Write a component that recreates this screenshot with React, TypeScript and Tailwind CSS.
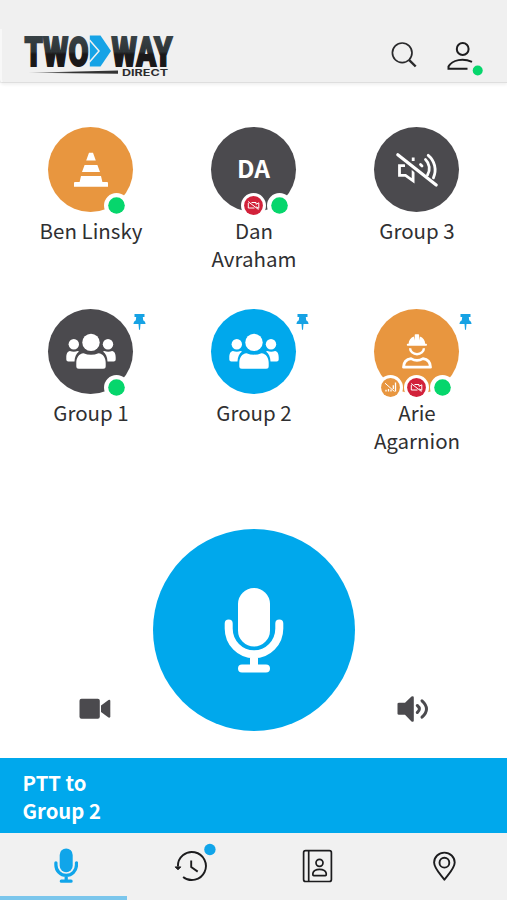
import React from "react";

type Status = "online" | "noVideo" | "noSignal";

type Contact = {
  name: string;
  color: string;
  icon: React.ReactNode;
  pinned?: boolean;
  status?: Status[];
};

function ConeIcon() {
  return (
    <svg viewBox="0 0 85 85" className="size-[85px]" fill="#fff">
      <path d="M41 25.7h4l2.8 7.8h-9.6zM36.6 38h12.8l2.6 7H34zM33 49h20l1.4 6H59q1 0 1 1v3.7H26V56q0-1 1-1h4.6z" />
    </svg>
  );
}

function MutedIcon() {
  return (
    <svg viewBox="0 0 85 85" className="size-[85px]" fill="none" stroke="#fff" strokeWidth="2.8">
      <path d="M31 38.6h-5.5v9.8h6l7.6 5.4V43M39.2 30.5v3.5" />
      <path d="M46.5 37.5l1.500 1.500M51.500 32.500a12.500 12.500 0 0 1 2 15.500M54.2 28.3a19 19 0 0 1 5.2 22.5" strokeLinecap="round" />
      <path d="M24.6 30.4l36.5 29.6" stroke="#4b4a4e" strokeWidth="3" />
      <path d="M23.8 27.8l38.4 30.3" strokeLinecap="round" strokeWidth="3.2" />
    </svg>
  );
}

function GroupIcon() {
  return (
    <svg viewBox="0 0 85 85" className="size-[85px]" fill="#fff">
      <circle cx="43" cy="33.4" r="8.7" />
      <circle cx="25.8" cy="35.3" r="5.2" />
      <circle cx="60" cy="35.3" r="5.2" />
      <path d="M35.5 44.2c5 2 10 2 15 0 4.5.3 7.2 4.5 7.2 9.5v3.5q0 2.5-2.5 2.5H30.8q-2.5 0-2.5-2.5v-3.5c0-5 2.7-9.200 7.2-9.500z" />
      <path d="M21.9 42c2.5 1 5.2 1.1 7.8 0l1.3.6c-2.8 2-4.3 5.5-4.5 9.900h-6.200q-2 0-2-2v-2c0-3.500 1.100-6.200 3.600-6.500zM64.100 42c-2.500 1-5.200 1.100-7.800 0l-1.300.6c2.800 2 4.300 5.500 4.500 9.900h6.200q2 0 2-2v-2c0-3.500-1.100-6.200-3.600-6.500z" />
    </svg>
  );
}

function WorkerIcon() {
  return (
    <svg viewBox="0 0 85 85" className="size-[85px]" fill="#fff">
      <path d="M33.600 34.700h1c.1-3.600 2.200-6.300 5.300-7.300l.8 4.200V26q0-.8.8-.8h2.800q.8 0 .8.8v5.600l.8-4.200c3.100 1 5.200 3.700 5.300 7.300h1q.8 0 .8 1t-.8 1H33.600q-.8 0-.8-1t.8-1z" />
      <path d="M36.100 39.200a6.900 6 0 0 0 13.800 0" fill="none" stroke="#fff" strokeWidth="2.400" />
      <path d="M37 49.600q6 3.400 12 0c4.500.5 7.300 3.500 7.500 8.600h-27c.2-5.100 3-8.100 7.500-8.600z" fill="none" stroke="#fff" strokeWidth="2.800" strokeLinejoin="round" />
    </svg>
  );
}

function PinIcon() {
  return (
    <svg viewBox="0 0 13 16" className="absolute -right-[12.5px] top-[5px] h-4 w-[13px]" fill="#16a2e4">
      <path d="M1.500 0h10v2.900H9.800l.4 3.300q2.300 1 2.400 3.900H7.500l-.5 5.700H6l-.5-5.700H.4q.1-2.900 2.400-3.900l.4-3.300H1.500z" />
    </svg>
  );
}

function MicIcon({ className }: { className: string }) {
  return (
    <svg viewBox="0 0 60 86" className={className}>
      <rect x="14" y="1" width="32" height="58.5" rx="16" fill="currentColor" />
      <path d="M4.700 36.500v5a25.300 25.800 0 0 0 50.600 0v-5M30 68v12M18 81.600h24" fill="none" stroke="currentColor" strokeWidth="8" strokeLinecap="round" />
    </svg>
  );
}

function StatusBadge({ status }: { status: Status }) {
  return (
    <svg viewBox="0 0 25 25" className="size-[25px]" fill="none" stroke="#fff">
      <circle cx="12.500" cy="12.500" r="12.500" fill="#fff" stroke="none" />
      {status === "online" && <circle cx="12.500" cy="12.500" r="8.300" fill="#06d66c" stroke="none" />}
      {status === "noVideo" && (
        <>
          <circle cx="12.500" cy="12.500" r="9.400" fill="#d2213a" stroke="none" />
          <path d="M10.500 9.500H15v1.800l2.800-1.500v5.500L15 13.800M13.500 15H7.300v-5M7 8.500l10.500 8" />
        </>
      )}
      {status === "noSignal" && (
        <>
          <circle cx="12.500" cy="12.500" r="9.400" fill="#e8963f" stroke="none" />
          <path d="M8 16.500v-1.800M10.500 16.500v-2.500M13 16.500v-2M15.300 14v-3.800M17.500 16.500v-9" strokeWidth="1.300" />
          <path d="M7 8.200l9.500 8.300" />
        </>
      )}
    </svg>
  );
}

const contacts: Contact[] = [
  { name: "Ben Linsky", color: "bg-[#e8963f]", icon: <ConeIcon />, status: ["online"] },
  {
    name: "Dan Avraham",
    color: "bg-[#4b4a4e]",
    icon: <span className="pb-0.5 text-[24.5px] leading-none font-bold text-white">DA</span>,
    status: ["noVideo", "online"],
  },
  { name: "Group 3", color: "bg-[#4b4a4e]", icon: <MutedIcon /> },
  { name: "Group 1", color: "bg-[#4b4a4e]", icon: <GroupIcon />, pinned: true, status: ["online"] },
  { name: "Group 2", color: "bg-[#00a8ec]", icon: <GroupIcon />, pinned: true },
  {
    name: "Arie Agarnion",
    color: "bg-[#e8963f]",
    icon: <WorkerIcon />,
    pinned: true,
    status: ["noSignal", "noVideo", "online"],
  },
];

function ContactTile({ contact }: { contact: Contact }) {
  return (
    <div className="flex flex-col items-center">
      <div className={`relative flex size-[85px] items-center justify-center rounded-full ${contact.color}`}>
        {contact.icon}
        {contact.pinned && <PinIcon />}
        {contact.status && (
          <div className="absolute right-[4px] -bottom-[5.5px] flex gap-[0.8px]">
            {contact.status.map((s) => (
              <StatusBadge key={s} status={s} />
            ))}
          </div>
        )}
      </div>
      <p className="mt-[5px] w-[115px] pl-px text-center text-[20.5px] leading-[27.5px] text-[#2f2f31]">{contact.name}</p>
    </div>
  );
}

function Logo() {
  return (
    <svg viewBox="0 -8 152 58" className="-mt-2 h-[58px] w-[152px] shrink-0 overflow-visible">
      <defs>
        <linearGradient id="ink" gradientUnits="userSpaceOnUse" x1="0" y1="2" x2="0" y2="34">
          <stop offset="0" stopColor="#394347" />
          <stop offset="0.52" stopColor="#2d3336" />
          <stop offset="0.6" stopColor="#1a1819" />
          <stop offset="1" stopColor="#1a1819" />
        </linearGradient>
        <linearGradient id="line" x1="0" x2="1">
          <stop offset="0" stopColor="#aaa" />
          <stop offset="0.5" stopColor="#333" />
        </linearGradient>
      </defs>
      <g fill="url(#ink)" stroke="url(#ink)" strokeWidth="1.8" fontFamily="Roboto, sans-serif" fontWeight="900" fontSize="41.5">
        <text x="2.5" y="32.5" textLength="64" lengthAdjust="spacingAndGlyphs">TWO</text>
        <text x="89.500" y="32.500" textLength="61" lengthAdjust="spacingAndGlyphs">WAY</text>
      </g>
      <path d="M67.800 2.500H78.500l10.500 15.500L78.500 33.500H67.800z" fill="#16a3e6" />
      <path d="M67.500 7l9.500 11-9.500 11" fill="none" stroke="#f1f1f1" strokeWidth="1.500" />
      <path d="M6 39.800l90-2.300v3.300z" fill="url(#line)" />
      <text x="100" y="42.600" textLength="46" lengthAdjust="spacingAndGlyphs" fontFamily="Inter, sans-serif" fontWeight="700" fontSize="8.800" fill="#2b2b2d">DIRECT</text>
    </svg>
  );
}

function NavItem({ children, active }: { children: React.ReactNode; active?: boolean }) {
  return (
    <button className="flex h-[67px] flex-1 flex-col items-center justify-between pt-[13px]">
      {children}
      {active && <span className="h-1 w-full bg-[#7bc6ec]" />}
    </button>
  );
}

export default function App() {
  return (
    <div className="flex h-[900px] w-[507px] flex-col overflow-hidden bg-white font-['Noto_Sans_CJK_SC',sans-serif]">
      <header className="h-[83px] shrink-0 bg-[#f0f0f0] pt-[29px]">
        <div className="flex h-[54px] items-start rounded-bl-[4px] border-b border-l-2 border-b-[#dedede] border-l-[#f8f8f8] bg-[#f0f0f0] pt-1 pl-5 shadow-[0_2px_3px_rgba(0,0,0,0.06)]">
          <Logo />
          <svg viewBox="0 0 28 28" className="mt-[7px] ml-[216px] size-7 shrink-0" fill="none" stroke="#29292b">
            <circle cx="12.200" cy="12.800" r="9.800" strokeWidth="1.700" />
            <path d="M19 19.800l6.700 6.700" strokeWidth="2.400" />
          </svg>
          <svg viewBox="0 0 38 38" className="mt-[5px] ml-[28px] h-[38px] w-[38px] shrink-0" fill="none" stroke="#1d1d1f" strokeWidth="2">
            <circle cx="16.700" cy="11" r="5.900" />
            <path d="M21.500 30.800H2.500v-2.200c4-7.200 14.800-8.500 23.500-4.800" />
            <circle cx="31.700" cy="32.500" r="5" fill="#06d66c" stroke="none" />
          </svg>
        </div>
      </header>

      <main className="flex flex-1 flex-col justify-between pt-11">
        <div className="grid auto-rows-[182px] grid-cols-3 px-[9px]">
          {contacts.map((c) => (
            <ContactTile key={c.name} contact={c} />
          ))}
        </div>

        <div className="flex items-end pb-[27px] pl-[79px]">
          <svg viewBox="0 0 32 26" className="mb-[9px] h-[26px] w-8" fill="#4b4a4e">
            <rect x="0.500" y="2.700" width="20.300" height="20" rx="2" />
            <path d="M22 9.500l7.500-5.600q1.800-.6 1.800 1.200v15.200q0 1.800-1.800 1.200L22 15.900z" />
          </svg>
          <button className="ml-[42px] flex size-[202px] items-center justify-center rounded-full bg-[#00a8ec] text-white">
            <MicIcon className="h-[86px] w-[60px]" />
          </button>
          <svg viewBox="0 0 32 26" className="mb-[9px] ml-[42px] h-[26px] w-8" fill="#4b4a4e">
            <path d="M2 6.700h6L14.500.5q2.300-.8 2.300 1v23q0 1.800-2.300 1L8 18.700H2q-1.500 0-1.500-1v-10q0-1 1.500-1z" />
            <path d="M20.300 9.500q4.200 3.500 0 7M25 4.800q9 8.200 0 16.400" fill="none" stroke="#4b4a4e" strokeWidth="3" strokeLinecap="round" />
          </svg>
        </div>
      </main>

      <section className="h-[75px] shrink-0 bg-[#00a8ec] pt-[11px] pl-[22.5px] text-[20.3px] leading-[27.5px] font-bold text-white">
        <p>PTT to</p>
        <p>Group 2</p>
      </section>

      <nav className="flex h-[67px] shrink-0 bg-[#f1f1f1]">
        <NavItem active>
          <span className="pt-[2px] pl-[5px] text-[#10a5ea]">
            <MicIcon className="h-[35px] w-[24.4px]" />
          </span>
        </NavItem>
        <NavItem>
          <svg viewBox="0 0 46 40" className="h-10 w-[46px] overflow-visible" fill="none" stroke="#1c1c1e" strokeWidth="1.9">
            <path d="M10.900 20.500a14 14 0 1 1 5.200 10.400" />
            <path d="M8.200 20.900h5.600l-2.800 2.900z" fill="#1c1c1e" strokeWidth="1" strokeLinejoin="round" />
            <path d="M24.200 14.500V21l6.500 4.600" />
            <circle cx="42.900" cy="3.500" r="5.700" fill="#10a5ea" stroke="none" />
          </svg>
        </NavItem>
        <NavItem>
          <svg viewBox="0 0 40 40" className="size-10" fill="none" stroke="#1c1c1e" strokeWidth="1.700">
            <rect x="6.600" y="4.700" width="27.800" height="30.800" rx="2" />
            <path d="M11.700 5v30.500" />
            <circle cx="22.500" cy="16.800" r="3.500" />
            <path d="M15.900 29v-1.700c1.300-5.200 12-5.200 13.300 0V29q0 .6-.8.6H16.700q-.8 0-.8-.6z" />
          </svg>
        </NavItem>
        <NavItem>
          <svg viewBox="0 0 40 40" className="size-10" fill="none" stroke="#1c1c1e" strokeWidth="1.900">
            <path d="M20.400 33.800C17 29 10.100 22.500 10.100 16.600a10.300 10 0 0 1 20.600 0c0 5.900-6.900 12.400-10.300 17.200z" strokeLinejoin="round" />
            <circle cx="20.400" cy="16.700" r="4.900" />
          </svg>
        </NavItem>
      </nav>
    </div>
  );
}
